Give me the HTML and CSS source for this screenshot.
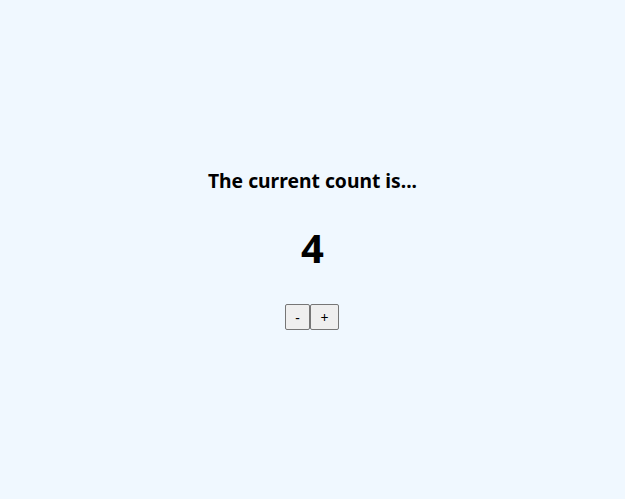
FILE: index.html
```html
<!DOCTYPE html>
<html lang="en">
<head>
<meta charset="utf-8">
<title>Counter</title>
<link rel="stylesheet" href="styles.css">
</head>
<body>
<main class="counter">
  <h3 class="counter-title">The current count is...</h3>
  <h1 class="counter-value">4</h1>
  <div class="counter-buttons">
    <button class="btn btn-minus" type="button">-</button>
    <button class="btn btn-plus" type="button">+</button>
  </div>
</main>
</body>
</html>
```

FILE: styles.css
```css
html, body {
  margin: 0;
  padding: 0;
  height: 100%;
}

body {
  background: #f0f8ff;
  font-family: "Noto Sans", "Open Sans", sans-serif;
  color: #000;
}

.counter {
  height: 100vh;
  display: flex;
  flex-direction: column;
  align-items: center;
  justify-content: center;
}

.counter-title {
  margin: 0;
  font-size: 19.3px;
  line-height: 26px;
  font-weight: 700;
}

.counter-value {
  margin: 27px 0 0;
  font-size: 40px;
  line-height: 54px;
  font-weight: 700;
}

.counter-buttons {
  margin: 29px 1px 1px 0;
  display: flex;
}

.btn {
  height: 26px;
  padding: 0;
  font-family: "Noto Sans", sans-serif;
  font-size: 14px;
  color: #000;
  background: #efefef;
  border: 1px solid #767676;
  border-radius: 2px;
}

.btn-minus {
  width: 25px;
}

.btn-plus {
  width: 29px;
}
```
